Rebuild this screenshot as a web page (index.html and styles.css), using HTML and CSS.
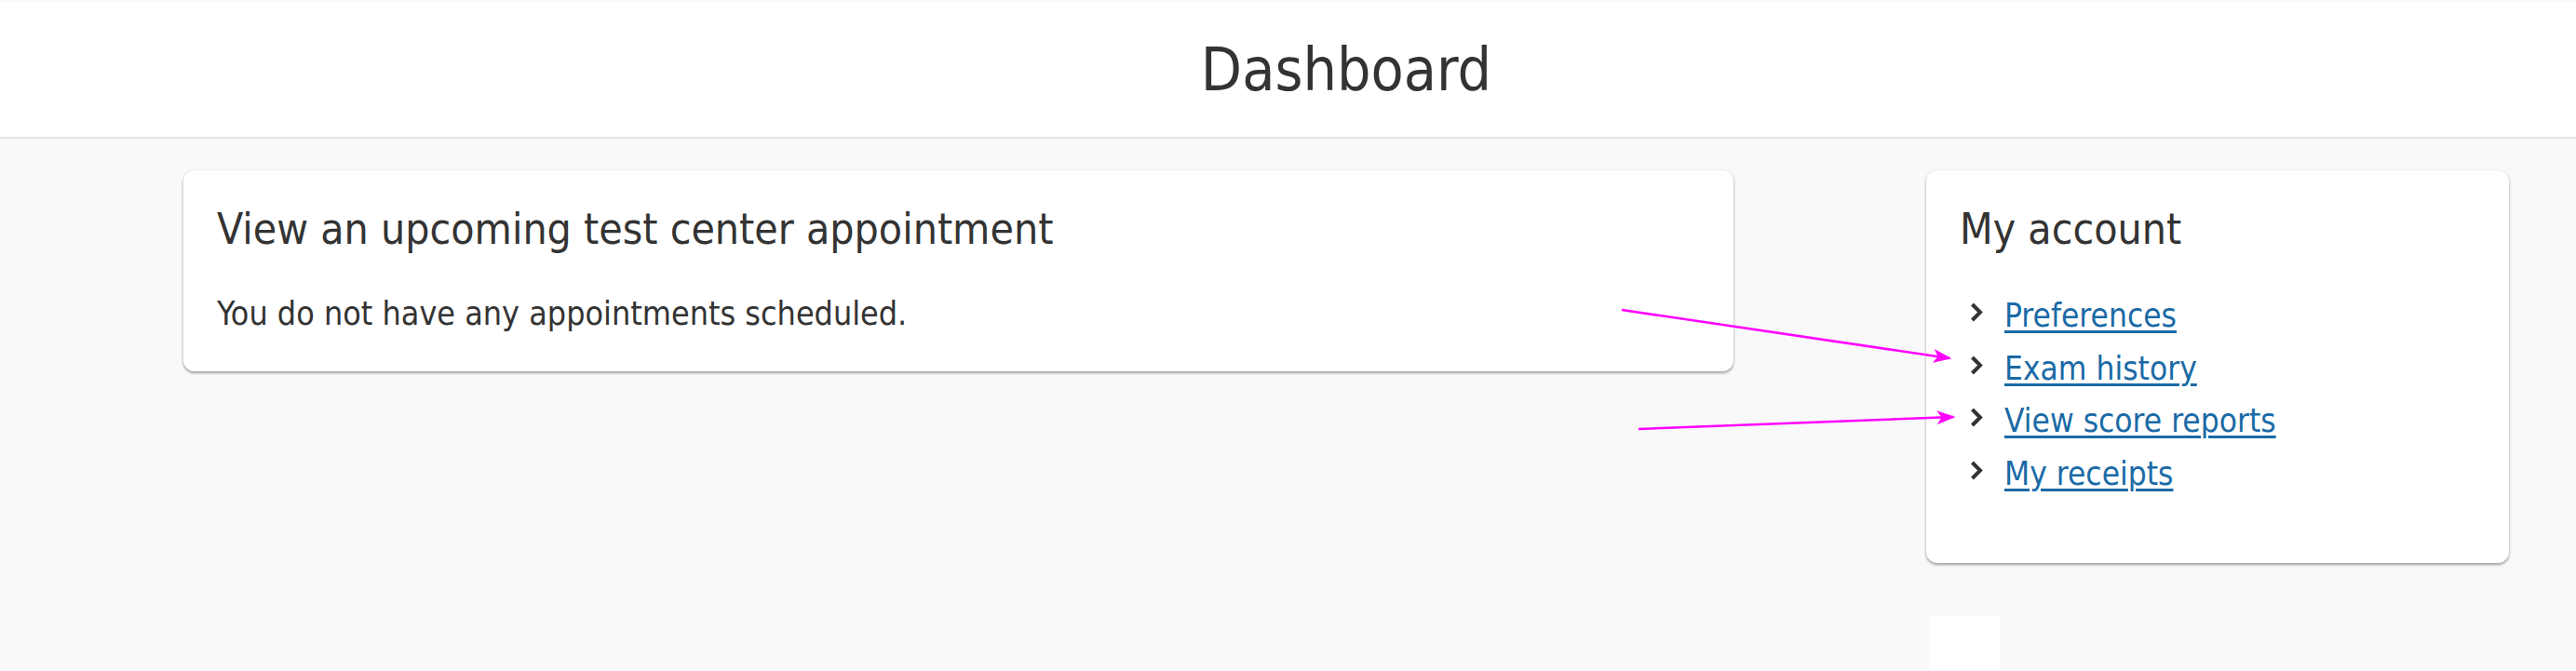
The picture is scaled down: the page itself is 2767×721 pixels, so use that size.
FILE: index.html
```html
<!DOCTYPE html>
<html lang="en">
<head>
<meta charset="utf-8">
<title>Dashboard</title>
<link rel="stylesheet" href="styles.css">
</head>
<body>
<header class="page-header">
  <h1 class="page-title">Dashboard</h1>
</header>
<main class="dashboard">
  <section class="card appointments">
    <h2 class="card-title">View an upcoming test center appointment</h2>
    <p class="card-text">You do not have any appointments scheduled.</p>
  </section>
  <aside class="side">
    <section class="card account">
      <h2 class="card-title">My account</h2>
      <ul class="links">
        <li><svg class="chev" viewBox="0 0 16 24"><path d="M3.5 3 L12 11.5 L3.5 20" /></svg><a href="#">Preferences</a></li>
        <li><svg class="chev" viewBox="0 0 16 24"><path d="M3.5 3 L12 11.5 L3.5 20" /></svg><a href="#">Exam history</a></li>
        <li><svg class="chev" viewBox="0 0 16 24"><path d="M3.5 3 L12 11.5 L3.5 20" /></svg><a href="#">View score reports</a></li>
        <li><svg class="chev" viewBox="0 0 16 24"><path d="M3.5 3 L12 11.5 L3.5 20" /></svg><a href="#">My receipts</a></li>
      </ul>
    </section>
    <div class="side-box"></div>
  </aside>
</main>
<svg class="annotations" viewBox="0 0 2767 721" width="2767" height="721">
  <defs>
    <marker id="ah" markerWidth="8" markerHeight="6" refX="7" refY="3" orient="auto" markerUnits="strokeWidth">
      <path d="M0 0 L8 3 L0 6 L2 3 Z" fill="#ff00ff"/>
    </marker>
  </defs>
  <line x1="1742" y1="333" x2="2094" y2="385" stroke="#ff00ff" stroke-width="2.5" marker-end="url(#ah)"/>
  <line x1="1760" y1="461" x2="2098" y2="448" stroke="#ff00ff" stroke-width="2.5" marker-end="url(#ah)"/>
</svg>
</body>
</html>
```
FILE: styles.css
```css
html, body {
  margin: 0;
  padding: 0;
}
body {
  background: #f9f9f9;
  font-family: "DejaVu Sans Condensed", "DejaVu Sans", Verdana, sans-serif;
  font-stretch: condensed;
  color: #333333;
  padding-top: 3px;
  height: 718px;
  overflow: hidden;
  position: relative;
}
.page-header {
  background: #ffffff;
  border-bottom: 2px solid #e2e2e2;
  height: 144px;
  display: flex;
  align-items: center;
  justify-content: center;
  padding-left: 125px;
}
.page-title {
  margin: 0;
  font-weight: normal;
  font-size: 64px;
  line-height: 1;
  color: #333333;
}
.dashboard {
  display: grid;
  grid-template-columns: 1665px 626px;
  column-gap: 207px;
  align-items: start;
  padding: 34px 0 0 197px;
}
.card {
  background: #ffffff;
  border-radius: 12px;
  box-shadow: 0 2px 3px rgba(0, 0, 0, 0.35), 0 0 4px rgba(0, 0, 0, 0.06);
  padding: 36px 36px 0 36px;
}
.appointments {
  height: 216px;
  box-sizing: border-box;
}
.account {
  height: 422px;
  box-sizing: border-box;
}
.card-title {
  margin: 0;
  font-weight: normal;
  font-size: 46px;
  line-height: 1.2;
  color: #333333;
}
.card-text {
  margin: 42px 0 0 0;
  font-size: 35.6px;
  line-height: 1.2;
}
.links {
  list-style: none;
  margin: 37px 0 0 0;
  padding: 0;
}
.links li {
  display: flex;
  align-items: center;
  gap: 22px;
  height: 56.5px;
  font-size: 35px;
}
.chev {
  width: 16px;
  height: 24px;
  flex: none;
  margin: -6px 0 0 10px;
  fill: none;
  stroke: #333333;
  stroke-width: 4;
}
.links a {
  color: #1a6aa6;
  text-decoration: underline;
  text-decoration-thickness: 3px;
  text-underline-offset: 4px;
}
.side-box {
  width: 77px;
  height: 80px;
  background: #ffffff;
  margin: 57px 0 0 3px;
}
.annotations {
  position: absolute;
  left: 0;
  top: 0;
  pointer-events: none;
}
```
